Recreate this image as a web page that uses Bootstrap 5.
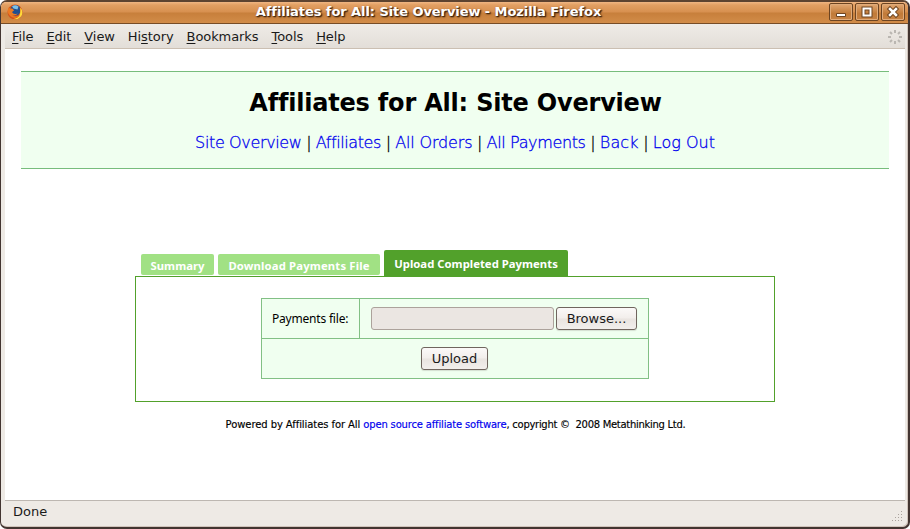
<!DOCTYPE html>
<html lang="en">
<head>
<meta charset="utf-8">
<title>Affiliates for All: Site Overview</title>
<link href="https://cdn.jsdelivr.net/npm/bootstrap@5.3.0/dist/css/bootstrap.min.css" rel="stylesheet">
<style>
html,body{height:100%;overflow:hidden;background:#fff}
body{font-family:"DejaVu Sans",sans-serif;color:#000;line-height:1.2}
a{color:#00e;text-decoration:none}
.win{width:910px;height:529px;border:solid #433531;border-width:2px 2px 2px 1px;border-top-color:#5d4330;border-radius:7px;background:#eeeae5;box-shadow:inset -1px -1px #d0c4bb}
.titlebar{height:22px;border-bottom:1px solid #774c26;border-radius:5px 5px 0 0;background:linear-gradient(#f0b683 0,#e29f62 3px,#d79050 10px,#c77f3b 11px,#d28c49 100%);padding:0 3px 1px 6px}
.titlebar .caption{font-size:13px;font-weight:700;color:#fff;text-shadow:1px 1px 1px #40250f,1px 1px 2px #40250f;letter-spacing:-.07px;padding-left:5px}
.wb{width:24px;height:18px;border:1px solid #6d4421;border-radius:2px;background:linear-gradient(#e2a873,#c17a38 60%,#c78345);box-shadow:inset 0 0 0 1px #e0ab7a}
.menubar{height:25px;border-bottom:1px solid #cbbfb2;background:linear-gradient(#efebe7,#e3ded8);margin:0 3px 0 4px;padding-top:1px;font-size:13px;color:#1a1a1a}
.menubar .items{gap:13px;margin-left:-1px;letter-spacing:-.08px}
.menubar span{white-space:nowrap}
.menubar u{text-underline-offset:2px;text-decoration-thickness:1px}
.page{height:451px;margin:0 3px 0 4px;background:#fff;padding:22px 16px 0}
.masthead{height:98px;border:solid #77bd7c;border-width:1px 0;background:#f0fff0}
.masthead h1{font-size:24px;font-weight:700;line-height:28px;margin:17px 0 0;padding-left:1px;letter-spacing:-.2px}
.masthead .links{font-size:16px;line-height:20px;margin-top:16px;font-weight:200;white-space:pre;letter-spacing:-.45px;-webkit-text-stroke:.3px currentColor}
.masthead .links a{letter-spacing:-.36px}
.masthead .links a:nth-child(2){letter-spacing:-.4px}
.masthead .links a:nth-child(3){letter-spacing:-.16px}
.masthead .links a:nth-child(5){letter-spacing:.1px}
.masthead .links a:last-child{letter-spacing:0}
.tabarea{width:640px;margin:80px auto 0;padding-top:1px}
.tabs{height:26px;padding-left:6px;gap:4px;font:700 11.3px/24px "Noto Sans",sans-serif;letter-spacing:.02px;color:#fff;white-space:nowrap}
.tabs div{height:21px;line-height:23px;margin-bottom:1px;background:#a1e184;border-radius:2px;text-align:center}
.tabs .dl{letter-spacing:.15px}
.tabs .sel{height:26px;margin:0;line-height:27px;background:#52a12b;border-radius:2px 2px 0 0}
.panel{height:126px;border:1px solid #52a12b;padding-top:21px}
.form-grid{width:388px;height:81px;border:1px solid #82c085;background:#f0fff0;margin-left:125px}
.fieldrow{height:40px;border-bottom:1px solid #82c085}
.fieldrow .name{width:98px;border-right:1px solid #82c085;font:12px/39px "Noto Sans",sans-serif;letter-spacing:-.2px;padding-left:10px}
.fbox{width:183px;height:23px;border:1px solid #aca29b;border-radius:3px;background:#ebe6e2;margin:8px 2px 0 11px}
.btn.gbtn{height:23px;border:1px solid #70655e;border-radius:3px;background:linear-gradient(#fbf9f8 0,#f2eeeb 48%,#e9e4e0 52%,#f2efec 100%);font-size:13px;line-height:20px;padding:1px 0 0;color:#1a1a1a;box-shadow:0 1px 1px #d4dfd1}
.foot{font-size:10px;line-height:14px;margin-top:16px;padding-left:1px;white-space:pre;letter-spacing:-.29px;-webkit-text-stroke:.15px currentColor}
.foot .lead-in{letter-spacing:-.08px}
.foot a{letter-spacing:-.17px}
.status{height:24px;border-top:1px solid #bdb7b1;margin:0 3px 0 4px;padding:3px 0 0 8px;font-size:13px;color:#1a1a1a;position:relative}
.status svg{position:absolute;right:1px;bottom:1px}
</style>
<script src="https://cdn.jsdelivr.net/npm/bootstrap@5.3.0/dist/js/bootstrap.bundle.min.js"></script>
</head>
<body>
<div class="win">
  <div class="titlebar d-flex align-items-center">
    <svg class="flex-shrink-0" width="16" height="16" viewBox="0 0 16 16"><circle cx="8" cy="8" r="7.5" fill="#d5521c"/><circle cx="8.500" cy="6.200" r="5.300" fill="#244f8e"/><path d="M5 2.500Q8 0 11.500 2.500L10.500 5.500 6.500 4.500Z" fill="#7cc0e6"/><path d="M1.200 3.500L3.500 4.500 5.500 4.500 7 6.500 5 8Q6 10.500 9 10L11 9.500Q9 12 5 11.500 9 13.500 12 11.500 14 8 12.800 3.500L15 6Q15.500 12 8 14 2 13 .7 8Z" fill="#ec7a22"/><path d="M13.300 3.500Q17 8 14 12.500 11 16 6 15.200 11 14 12.500 11.500 14 8 13.300 3.500Z" fill="#ffdb3a"/></svg>
    <div class="caption flex-grow-1 text-center">Affiliates for All: Site Overview - Mozilla Firefox</div>
    <div class="d-flex" style="gap:2px">
      <div class="wb"><svg class="d-block" width="22" height="16"><path d="M6.500 9.500h9v3h-9z" fill="#fff" stroke="#6d4421"/></svg></div>
      <div class="wb"><svg class="d-block" width="22" height="16"><path d="M7.500 4.500h7v7h-7z" fill="none" stroke="#6d4421" stroke-width="4"/><path d="M7.500 4.500h7v7h-7z" fill="none" stroke="#fff" stroke-width="2"/></svg></div>
      <div class="wb"><svg class="d-block" width="22" height="16"><path d="M8 5l6 6M14 5l-6 6" stroke="#6d4421" stroke-width="4.500" stroke-linecap="square"/><path d="M8 5l6 6M14 5l-6 6" stroke="#fff" stroke-width="2.500" stroke-linecap="square"/></svg></div>
    </div>
  </div>
  <div class="menubar d-flex align-items-center justify-content-between">
    <div class="items d-flex ps-2"><span><u>F</u>ile</span><span><u>E</u>dit</span><span><u>V</u>iew</span><span>Hi<u>s</u>tory</span><span><u>B</u>ookmarks</span><span><u>T</u>ools</span><span><u>H</u>elp</span></div>
    <svg width="14" height="14" style="margin-right:3px" viewBox="-7 -7 14 14" stroke="#bab6b1" stroke-width="2"><path d="M0-7v3M0 4v3M-7 0h3M4 0h3M-5-5l2 2M3 3l2 2M-5 5l2-2M3-3l2-2"/></svg>
  </div>
  <div class="page">
    <header class="masthead text-center">
      <h1>Affiliates for All: Site Overview</h1>
      <nav class="links"><a href="#">Site Overview</a> | <a href="#">Affiliates</a> | <a href="#">All Orders</a> | <a href="#">All Payments</a> | <a href="#">Back</a> | <a href="#">Log Out</a></nav>
    </header>
    <main class="tabarea">
      <div class="tabs d-flex align-items-end"><div style="width:73px">Summary</div><div class="dl" style="width:162px">Download Payments File</div><div class="sel" style="width:184px">Upload Completed Payments</div></div>
      <div class="panel">
        <form class="form-grid">
          <div class="fieldrow d-flex"><div class="name">Payments file:</div><div class="fbox"></div><button type="button" class="btn gbtn mt-2" style="width:81px">Browse...</button></div>
          <div class="text-center pt-2"><button type="button" class="btn gbtn d-block" style="width:67px;margin-left:159px">Upload</button></div>
        </form>
      </div>
    </main>
    <footer class="foot text-center"><span class="lead-in">Powered by Affiliates for All </span><a href="#">open source affiliate software</a>, copyright ©&nbsp; 2008 Metathinking Ltd.</footer>
  </div>
  <div class="status">Done<svg width="12" height="12" fill="#aaa39d"><path d="M9 0h1v1H9zM6 3h1v1H6zM9 3h1v1H9zM3 6h1v1H3zM6 6h1v1H6zM9 6h1v1H9zM0 9h1v1H0zM3 9h1v1H3zM6 9h1v1H6zM9 9h1v1H9z"/></svg></div>
</div>
</body>
</html>
